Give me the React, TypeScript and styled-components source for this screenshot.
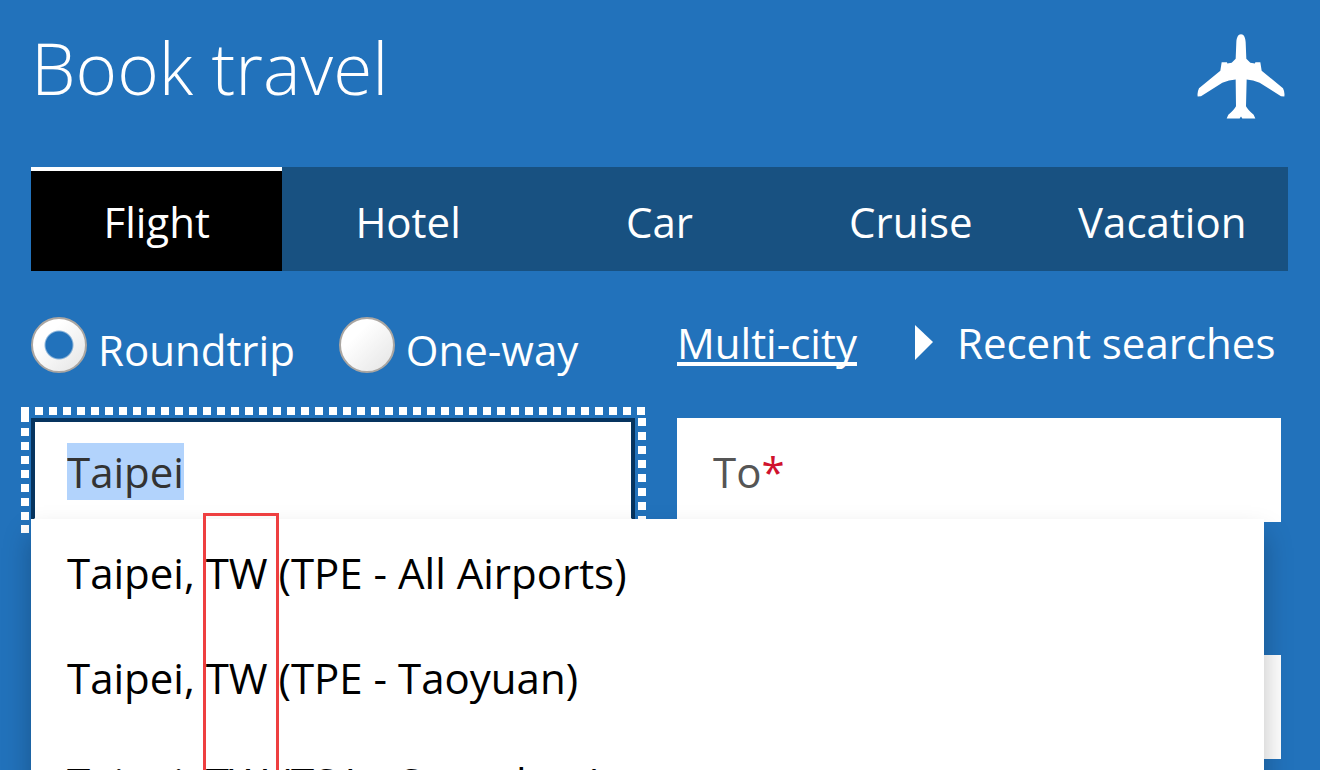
import React, { useEffect, useRef, useState } from 'react';
import styled, { createGlobalStyle } from 'styled-components';

const blue = '#2272bb';

const GlobalStyle = createGlobalStyle`
  *, *::before, *::after { box-sizing: border-box; }
  body { margin: 0; background: ${blue}; }
  button, input { font: inherit; }
`;

const Page = styled.main`
  height: 100vh;
  overflow: hidden;
  padding: 22px 32px 0 31px;
  background: ${blue};
  color: #fff;
  font-family: 'Open Sans', 'Noto Sans', sans-serif;
  font-size: 42px;
`;

const Header = styled.header`
  display: flex;
  justify-content: space-between;
  align-items: flex-end;
  height: 97px;
  padding-right: 3px;
  margin-bottom: 48px;
`;

const Title = styled.h1`
  align-self: flex-start;
  margin: 0;
  font-size: 71px;
  font-weight: 300;
  line-height: 92px;
`;

const PlaneIcon = styled.svg`
  width: 88px;
  height: 85px;
  fill: #fff;
`;

const Tabs = styled.div`
  display: grid;
  grid-template-columns: repeat(5, 1fr);
  margin-bottom: 46px;
  background: #185181;
`;

const Tab = styled.button<{ $active: boolean }>`
  height: 104px;
  padding: 0;
  border: 0;
  border-top: 4px solid ${(p) => (p.$active ? '#fff' : 'transparent')};
  background: ${(p) => (p.$active ? '#000' : 'transparent')};
  color: #fff;
`;

const Form = styled.form`
  padding-right: 7px;
`;

const Columns = styled.div`
  display: grid;
  grid-template-columns: repeat(2, minmax(0, 1fr));
  column-gap: 42px;
`;

const Options = styled(Columns)`
  height: 56px;
  margin-bottom: 45px;
`;

const RadioGroup = styled.div`
  display: flex;
  gap: 44px;
`;

const RadioLabel = styled.label`
  display: flex;
  align-items: flex-end;
  gap: 11px;
  line-height: 46px;
  white-space: nowrap;
`;

const Radio = styled.input`
  appearance: none;
  flex: none;
  width: 56px;
  height: 56px;
  margin: 0;
  border: 2px solid #aaa6a2;
  border-radius: 50%;
  background: linear-gradient(135deg, #fff 30%, #e4e4e4);

  &:checked {
    background:
      radial-gradient(circle, ${blue} 13px, transparent 15px),
      linear-gradient(135deg, #fff 30%, #e4e4e4);
  }
`;

const Links = styled.div`
  display: flex;
  align-items: flex-start;
  gap: 58px;
  line-height: 52px;
  white-space: nowrap;
`;

const MultiCity = styled.a`
  color: #fff;
  text-decoration: underline;
  text-decoration-thickness: 4px;
  text-underline-offset: 3px;
  text-decoration-skip-ink: none;
`;

const Recent = styled.button`
  display: flex;
  align-items: center;
  gap: 23px;
  padding: 0;
  border: 0;
  background: none;
  color: #fff;
  line-height: 52px;
`;

const Arrow = styled.svg`
  width: 19px;
  height: 36px;
  fill: #fff;
`;

const Fields = styled(Columns)`
  position: relative;
  row-gap: 133px;
`;

const Field = styled.div<{ $focused?: boolean }>`
  position: relative;
  display: flex;
  align-items: center;
  height: 104px;
  padding: 2px 32px 0;
  border: 4px solid ${(p) => (p.$focused ? '#06345f' : '#fff')};
  border-bottom-color: #fff;
  background: #fff;
  color: #555;
`;

const dots = (direction: string) =>
  `repeating-linear-gradient(to ${direction}, #fff 0 8px, transparent 8px 14px)`;

const FocusRing = styled.span`
  position: absolute;
  inset: -15px -15px -15px -14px;
  pointer-events: none;
  background:
    linear-gradient(#fff, #fff) left top / 8px 14px no-repeat,
    ${dots('right')} left top / 100% 8px no-repeat,
    ${dots('right')} left bottom / 100% 8px no-repeat,
    ${dots('bottom')} left 0 top 7px / 8px 100% no-repeat,
    ${dots('bottom')} right 0 top 11px / 8px 100% no-repeat;
`;

const TextInput = styled.input`
  flex: 1;
  min-width: 0;
  padding: 0;
  border: 0;
  outline: 0;
  background: none;
  color: #333;
  caret-color: transparent;

  &::selection {
    background: #b2d3fc;
    color: #333;
  }
`;

const Required = styled.span`
  color: #d0122d;
`;

const Suggestions = styled.ul`
  position: absolute;
  top: 101px;
  left: 0;
  right: 17px;
  margin: 0;
  padding: 1px 0 0;
  list-style: none;
  background: #fff;
  box-shadow: 0 16px 26px rgba(0, 0, 0, 0.25);
`;

const Suggestion = styled.li`
  padding: 0 36px;
  color: #000;
  line-height: 105px;
`;

const Highlight = styled.span`
  position: absolute;
  top: 95px;
  left: 172px;
  width: 76px;
  height: 320px;
  border: 3px solid #ee3f40;
  pointer-events: none;
`;

const tabs = ['Flight', 'Hotel', 'Car', 'Cruise', 'Vacation'];
const airports = [
  'Taipei, TW (TPE - All Airports)',
  'Taipei, TW (TPE - Taoyuan)',
  'Taipei, TW (TSA - Songshan)',
];

export default function App() {
  const [tab, setTab] = useState('Flight');
  const [trip, setTrip] = useState('Roundtrip');
  const from = useRef<HTMLInputElement>(null);

  useEffect(() => {
    from.current?.focus();
    from.current?.select();
  }, []);

  return (
    <Page>
      <GlobalStyle />
      <Header>
        <Title>Book travel</Title>
        <PlaneIcon viewBox="52 44 264 254" aria-hidden="true">
          <path d="M184 44 C175 44 171 54 170 68 L168 118 L156 130 L143 132 L142 128 L126 128 L122 154 L58 206 Q52 218 54 231 L64 230 L128 190 Q148 181 168 180 L169 260 Q164 270 146 286 L141 297 L180 297 L184 291 L188 297 L227 297 L222 286 Q204 270 199 260 L201 180 Q220 181 240 190 L304 230 L314 231 Q316 218 310 206 L246 154 L242 128 L227 128 L226 132 L212 130 L200 118 L198 68 C197 54 193 44 184 44 Z" />
        </PlaneIcon>
      </Header>

      <Tabs role="tablist">
        {tabs.map((name) => (
          <Tab key={name} type="button" role="tab" aria-selected={tab === name} $active={tab === name} onClick={() => setTab(name)}>
            {name}
          </Tab>
        ))}
      </Tabs>

      <Form>
        <Options>
          <RadioGroup>
            {['Roundtrip', 'One-way'].map((name) => (
              <RadioLabel key={name}>
                <Radio type="radio" name="trip" checked={trip === name} onChange={() => setTrip(name)} />
                {name}
              </RadioLabel>
            ))}
          </RadioGroup>
          <Links>
            <MultiCity href="#multi-city">Multi-city</MultiCity>
            <Recent type="button">
              <Arrow viewBox="0 0 19 36" aria-hidden="true">
                <path d="M0 0 L18 17 L0 35 Z" />
              </Arrow>
              Recent searches
            </Recent>
          </Links>
        </Options>

        <Fields>
          <Field $focused>
            <FocusRing />
            <TextInput ref={from} aria-label="From" defaultValue="Taipei" autoComplete="off" />
          </Field>
          <Field>
            <label htmlFor="to">
              To<Required>*</Required>
            </label>
            <TextInput id="to" />
          </Field>
          <Field>
            <TextInput aria-label="Depart" />
          </Field>
          <Field>
            <TextInput aria-label="Return" />
          </Field>
          <Suggestions>
            {airports.map((name) => (
              <Suggestion key={name}>{name}</Suggestion>
            ))}
          </Suggestions>
          <Highlight />
        </Fields>
      </Form>
    </Page>
  );
}
